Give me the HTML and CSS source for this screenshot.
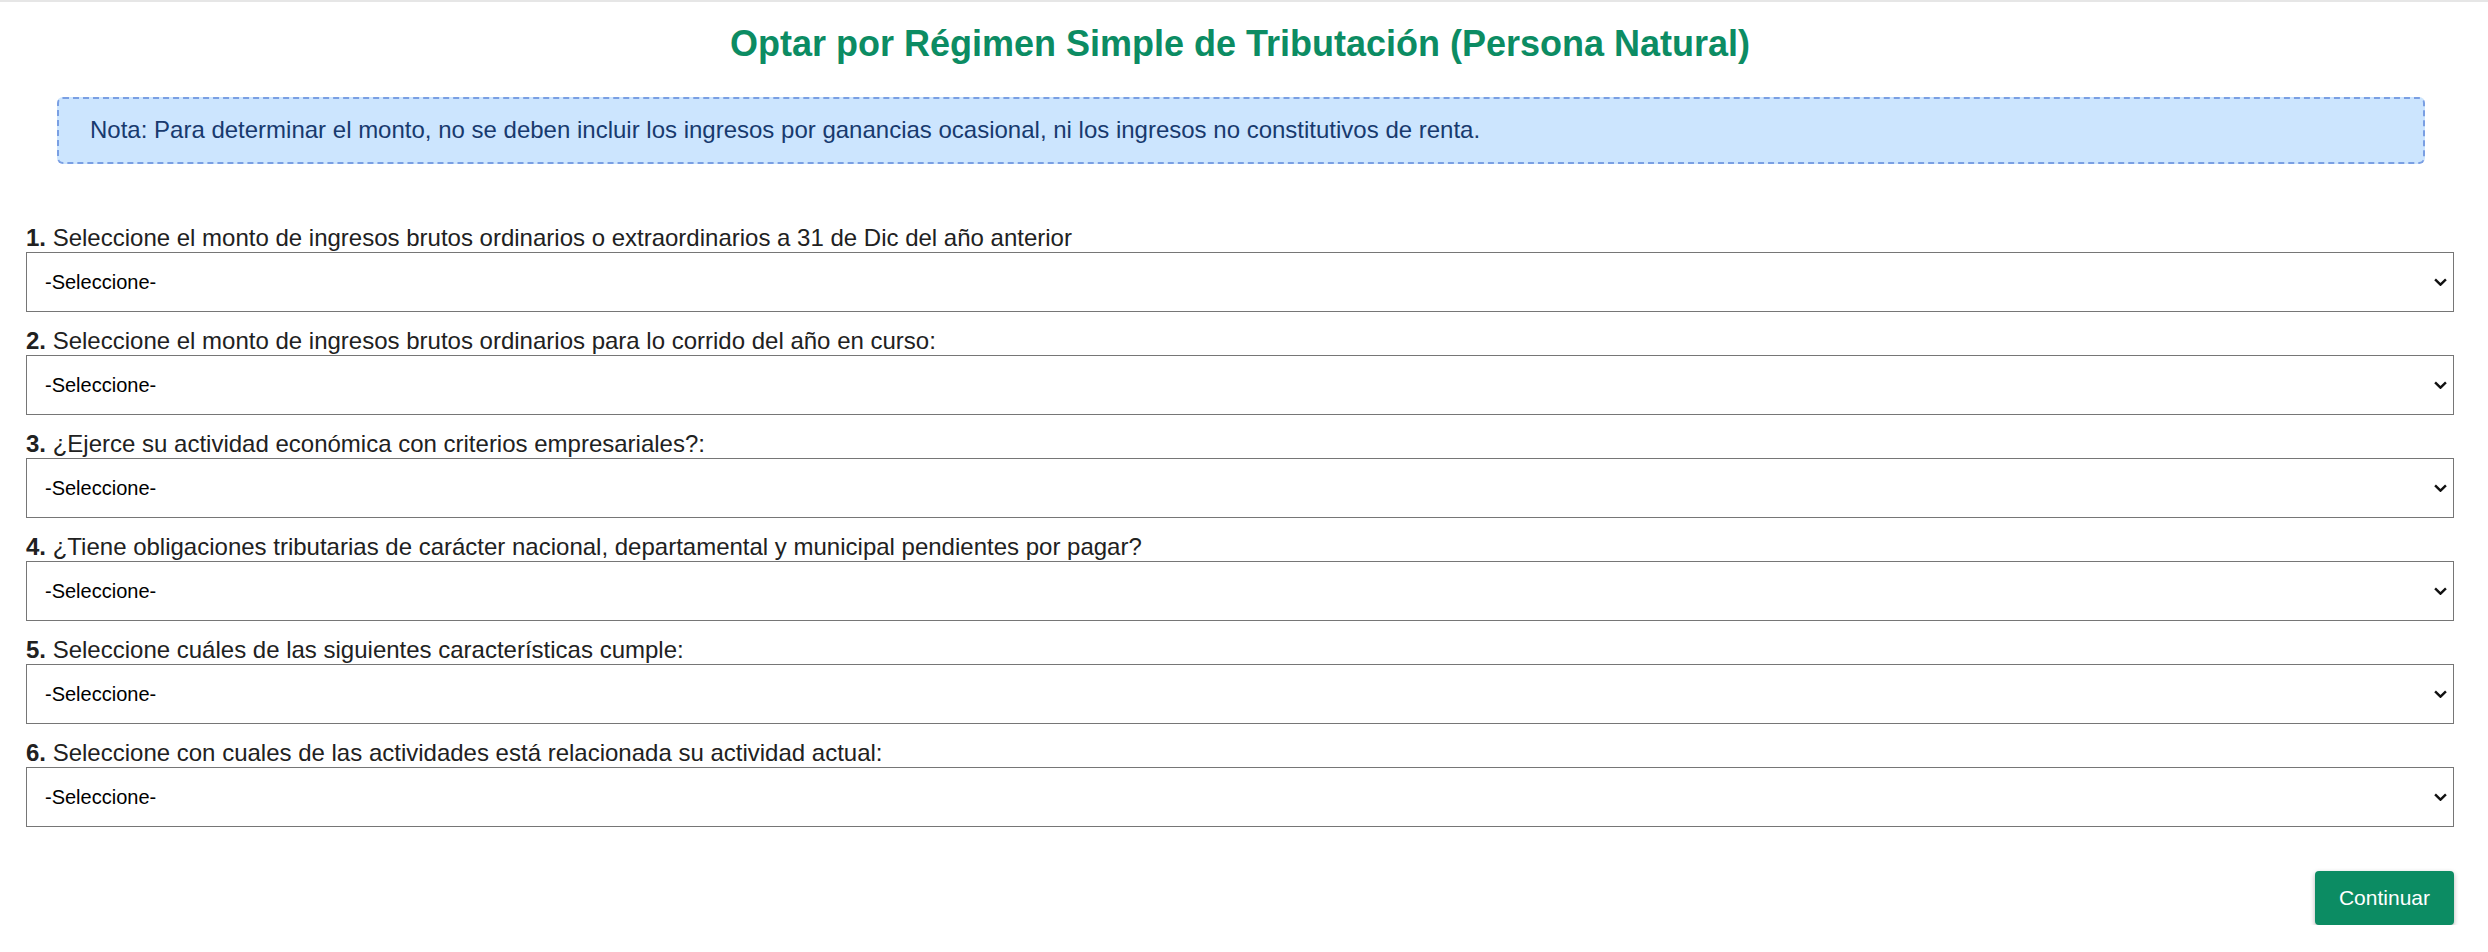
FILE: index.html
```html
<!DOCTYPE html>
<html lang="es">
<head>
    <meta charset="UTF-8">
    <title>Optar por Régimen Simple de Tributación</title>
    <link rel="stylesheet" href="styles.css">
</head>
<body>
    <div class="page">
        <h1 class="title">Optar por Régimen Simple de Tributación (Persona Natural)</h1>

        <div class="note">
            Nota: Para determinar el monto, no se deben incluir los ingresos por ganancias ocasional, ni los ingresos no constitutivos de renta.
        </div>

        <form class="form">
            <div class="field">
                <label for="q1"><b>1.</b> Seleccione el monto de ingresos brutos ordinarios o extraordinarios a 31 de Dic del año anterior</label>
                <div class="select-wrap">
                    <select id="q1"><option>-Seleccione-</option></select>
                    <svg class="chevron" viewBox="0 0 12 7"><path d="M1 1l5 5 5-5"/></svg>
                </div>
            </div>
            <div class="field">
                <label for="q2"><b>2.</b> Seleccione el monto de ingresos brutos ordinarios para lo corrido del año en curso:</label>
                <div class="select-wrap">
                    <select id="q2"><option>-Seleccione-</option></select>
                    <svg class="chevron" viewBox="0 0 12 7"><path d="M1 1l5 5 5-5"/></svg>
                </div>
            </div>
            <div class="field">
                <label for="q3"><b>3.</b> ¿Ejerce su actividad económica con criterios empresariales?:</label>
                <div class="select-wrap">
                    <select id="q3"><option>-Seleccione-</option></select>
                    <svg class="chevron" viewBox="0 0 12 7"><path d="M1 1l5 5 5-5"/></svg>
                </div>
            </div>
            <div class="field">
                <label for="q4"><b>4.</b> ¿Tiene obligaciones tributarias de carácter nacional, departamental y municipal pendientes por pagar?</label>
                <div class="select-wrap">
                    <select id="q4"><option>-Seleccione-</option></select>
                    <svg class="chevron" viewBox="0 0 12 7"><path d="M1 1l5 5 5-5"/></svg>
                </div>
            </div>
            <div class="field">
                <label for="q5"><b>5.</b> Seleccione cuáles de las siguientes características cumple:</label>
                <div class="select-wrap">
                    <select id="q5"><option>-Seleccione-</option></select>
                    <svg class="chevron" viewBox="0 0 12 7"><path d="M1 1l5 5 5-5"/></svg>
                </div>
            </div>
            <div class="field">
                <label for="q6"><b>6.</b> Seleccione con cuales de las actividades está relacionada su actividad actual:</label>
                <div class="select-wrap">
                    <select id="q6"><option>-Seleccione-</option></select>
                    <svg class="chevron" viewBox="0 0 12 7"><path d="M1 1l5 5 5-5"/></svg>
                </div>
            </div>

            <div class="actions">
                <button type="button" class="btn-primary">Continuar</button>
            </div>
        </form>
    </div>
</body>
</html>
```

FILE: styles.css
```css
:root {
    --green: #0c8c63;
    --text: #212121;
    --note-bg: #cce5fe;
    --note-border: #7a9fe3;
    --note-text: #183a6e;
    --select-border: #767676;
}

body {
    margin: 0;
    font-family: "Liberation Sans", Arial, sans-serif;
    color: var(--text);
    background: #ffffff;
    border-top: 2px solid #e6e6e6;
}

.page {
    padding: 0 34px 0 26px;
}

.title {
    margin: 21px 0 0;
    font-size: 36px;
    font-weight: 700;
    line-height: 41px;
    text-align: center;
    color: var(--green);
}

.note {
    margin: 33px 29px 0 31px;
    padding: 17px 31px 18px;
    font-size: 24px;
    line-height: 28px;
    color: var(--note-text);
    background: var(--note-bg);
    border: 2px dashed var(--note-border);
    border-radius: 6px;
}

.form {
    margin-top: 60px;
}

.field {
    margin-bottom: 15px;
}

.field label {
    display: block;
    font-size: 24px;
    line-height: 28px;
}

.select-wrap {
    position: relative;
}

.select-wrap select {
    display: block;
    width: 100%;
    height: 60px;
    margin: 0;
    padding: 0 40px 0 18px;
    font-family: "Liberation Sans", Arial, sans-serif;
    font-size: 20px;
    color: #000000;
    background: #ffffff;
    border: 1px solid var(--select-border);
    border-radius: 0;
    -webkit-appearance: none;
    appearance: none;
}

.chevron {
    position: absolute;
    right: 7px;
    top: 26px;
    width: 13px;
    height: 8px;
    fill: none;
    stroke: #111111;
    stroke-width: 2.2;
    pointer-events: none;
}

.actions {
    display: flex;
    justify-content: flex-end;
    margin-top: 44px;
}

.btn-primary {
    height: 54px;
    padding: 0 24px;
    font-family: "Liberation Sans", Arial, sans-serif;
    font-size: 21px;
    color: #ffffff;
    background: var(--green);
    border: none;
    border-radius: 4px;
    box-shadow: 0 2px 5px rgba(0, 0, 0, 0.3);
    cursor: pointer;
}
```
